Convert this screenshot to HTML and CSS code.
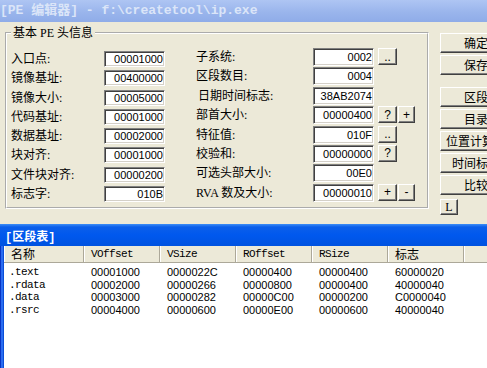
FILE: index.html
```html
<!DOCTYPE html>
<html>
<head>
<meta charset="utf-8">
<link rel="stylesheet" href="styles.css">
</head>
<body>
<div class="titlebar">[PE 编辑器] - f:\createtool\ip.exe</div>
<div class="panel">
  <fieldset class="group">
    <legend>基本 PE 头信息</legend>
    <div class="cols">
      <div class="col left">
        <div class="row"><span class="lbl">入口点:</span><span class="field">00001000</span></div>
        <div class="row"><span class="lbl">镜像基址:</span><span class="field">00400000</span></div>
        <div class="row"><span class="lbl">镜像大小:</span><span class="field">00005000</span></div>
        <div class="row"><span class="lbl">代码基址:</span><span class="field">00001000</span></div>
        <div class="row"><span class="lbl">数据基址:</span><span class="field">00002000</span></div>
        <div class="row"><span class="lbl">块对齐:</span><span class="field">00001000</span></div>
        <div class="row"><span class="lbl">文件块对齐:</span><span class="field">00000200</span></div>
        <div class="row"><span class="lbl">标志字:</span><span class="field">010B</span></div>
      </div>
      <div class="col right">
        <div class="row"><span class="lbl">子系统:</span><span class="field">0002</span><span class="btn b1">..</span></div>
        <div class="row"><span class="lbl">区段数目:</span><span class="field">0004</span></div>
        <div class="row"><span class="lbl ind">日期时间标志:</span><span class="field">38AB2074</span></div>
        <div class="row"><span class="lbl">部首大小:</span><span class="field">00000400</span><span class="btn b1">?</span><span class="btn b2">+</span></div>
        <div class="row"><span class="lbl">特征值:</span><span class="field">010F</span><span class="btn b1">..</span></div>
        <div class="row"><span class="lbl">校验和:</span><span class="field">00000000</span><span class="btn b1">?</span></div>
        <div class="row"><span class="lbl">可选头部大小:</span><span class="field">00E0</span></div>
        <div class="row"><span class="lbl">RVA 数及大小:</span><span class="field">00000010</span><span class="btn b1">+</span><span class="btn b2">-</span></div>
      </div>
    </div>
  </fieldset>
  <div class="side">
    <div class="btn big">确定</div>
    <div class="btn big">保存</div>
    <div class="btn big sep">区段</div>
    <div class="btn big">目录</div>
    <div class="btn big">位置计算器</div>
    <div class="btn big">时间标志</div>
    <div class="btn big">比较</div>
    <div class="btn lb">L</div>
  </div>
</div>
<div class="lower">
  <div class="gutter"></div>
  <div class="win">
    <div class="wtitle">
      <span>[区段表]</span>
      <svg class="close" width="12" height="13" viewBox="0 0 12 13">
        <rect x="0.5" y="0.5" width="11" height="12" rx="2" fill="#e25b2e" stroke="#ffffff"/>
        <path d="M3.3 3.8 L8.7 9.2 M8.7 3.8 L3.3 9.2" stroke="#ffffff" stroke-width="1.7" stroke-linecap="square"/>
      </svg>
    </div>
    <div class="wbody">
      <div class="wborder"></div>
      <div class="list">
        <div class="lhead">
          <div class="hc first">名称</div>
          <div class="hc mono">VOffset</div>
          <div class="hc mono">VSize</div>
          <div class="hc mono">ROffset</div>
          <div class="hc mono">RSize</div>
          <div class="hc">标志</div>
          <div class="hc fill"></div>
        </div>
        <div class="lrows">
          <div class="lrow"><span class="c first mono">.text</span><span class="c">00001000</span><span class="c">0000022C</span><span class="c">00000400</span><span class="c">00000400</span><span class="c">60000020</span></div>
          <div class="lrow"><span class="c first mono">.rdata</span><span class="c">00002000</span><span class="c">00000266</span><span class="c">00000800</span><span class="c">00000400</span><span class="c">40000040</span></div>
          <div class="lrow"><span class="c first mono">.data</span><span class="c">00003000</span><span class="c">00000282</span><span class="c">00000C00</span><span class="c">00000200</span><span class="c">C0000040</span></div>
          <div class="lrow"><span class="c first mono">.rsrc</span><span class="c">00004000</span><span class="c">00000600</span><span class="c">00000E00</span><span class="c">00000600</span><span class="c">40000040</span></div>
        </div>
      </div>
    </div>
  </div>
</div>
</body>
</html>
```

FILE: styles.css
```css
* { box-sizing: border-box; }
html, body { margin: 0; padding: 0; }
body {
  width: 487px;
  height: 368px;
  overflow: hidden;
  background: #ece9d8;
  color: #000;
  font: 12px "Liberation Serif", "Noto Sans CJK SC", serif;
}

.titlebar {
  height: 22px;
  background: linear-gradient(#aec5f3, #9ab5ec 55%, #8face8);
  color: #dbe5f8;
  font: bold 13px/22px "Liberation Mono", "Noto Sans CJK SC", monospace;
  white-space: nowrap;
  overflow: hidden;
}

.panel {
  height: 202px;
  display: flex;
  align-items: flex-start;
}

.group {
  margin: 4px 0 0 5px;
  padding: 0;
  width: 424px;
  height: 183px;
  min-width: 0;
  border: 2px groove #ffffff;
  flex: none;
}
.group legend {
  margin-left: 4px;
  padding: 0 2px;
  font-size: 12px;
  line-height: 14px;
}

.cols { display: flex; }
.col { display: flex; flex-direction: column; }
.col.left { margin-left: 4px; padding-top: 11px; }
.col.right { margin-left: 31px; padding-top: 8px; }

.row { display: flex; align-items: flex-start; }
.left .row { height: 19.3px; }
.right .row { height: 19.4px; }

.lbl { white-space: nowrap; }
.left .lbl { width: 93px; height: 16px; line-height: 16px; }
.right .lbl { width: 117px; height: 18px; line-height: 18px; }
.right .lbl.ind { padding-left: 2px; }

.field {
  width: 61px;
  background: #fff;
  border: 1px solid;
  border-color: #808080 #ffffff #ffffff #808080;
  box-shadow: inset 1px 1px 0 #404040, inset -1px -1px 0 #d4d0c8;
  text-align: right;
  padding-right: 1px;
  font: 11px "Liberation Sans", sans-serif;
}
.left .field { height: 16px; line-height: 14px; }
.right .field { height: 18px; line-height: 16px; }

.btn {
  background: #ece9d8;
  border: 1px solid;
  border-color: #ffffff #404040 #404040 #ffffff;
  box-shadow: inset -1px -1px 0 #808080;
  display: flex;
  align-items: center;
  justify-content: center;
  white-space: nowrap;
  overflow: hidden;
  font-size: 12px;
}
.btn.b1 { width: 19px; height: 17px; margin-left: 4px; font-family: "Liberation Sans", sans-serif; font-size: 12px; }
.btn.b2 { width: 17px; height: 17px; margin-left: 1px; font-family: "Liberation Sans", sans-serif; font-size: 12px; }

.side {
  margin-left: 11px;
  padding-top: 11px;
  display: flex;
  flex-direction: column;
  gap: 2px;
  flex: none;
}
.btn.big { width: 72px; height: 20px; }
.btn.sep { margin-top: 10px; }
.btn.lb { width: 18px; height: 16px; margin-top: 2px; font-family: "Liberation Serif", serif; }

.lower {
  height: 144px;
  display: flex;
}
.gutter { width: 4px; background: #f4f3ee; }
.win {
  flex: 1;
  display: flex;
  flex-direction: column;
  background: #fff;
}
.wtitle {
  height: 22px;
  display: flex;
  align-items: center;
  padding-left: 5px;
  padding-top: 1px;
  background: linear-gradient(#3d8ef7 0, #0b5fea 3px, #0058ee 50%, #0053e0 100%);
  color: #fff;
  font: bold 12px "Liberation Mono", "Noto Sans CJK SC", monospace;
}
.close { margin-left: auto; margin-right: 3px; }

.wbody { flex: 1; display: flex; }
.wborder {
  width: 4px;
  background: linear-gradient(90deg, #0934c4 0 1px, #2b6cf0 1px 3px, #0a4fd8 3px 4px);
}
.list {
  flex: 1;
  margin-right: 1px;
  border-right: 1px solid #bdbbae;
  background: #fff;
}
.lhead {
  display: flex;
  height: 17px;
  background: #ece9d8;
  border-bottom: 1px solid #aca899;
}
.hc {
  width: 76px;
  border-left: 1px solid #fff;
  border-right: 1px solid #aca899;
  padding-left: 6px;
  display: flex;
  align-items: center;
  white-space: nowrap;
  font-size: 12px;
}
.hc.first { width: 80px; }
.hc.fill { flex: 1; border-right: 0; }

.mono {
  font-family: "Liberation Mono", monospace;
  font-size: 11px;
  letter-spacing: -0.6px;
}

.lrows { padding-top: 2.7px; }
.lrow {
  display: flex;
  height: 12.67px;
  align-items: center;
}
.c {
  width: 76px;
  padding-left: 7px;
  font: 11px "Liberation Sans", sans-serif;
  white-space: nowrap;
}
.c.first { width: 80px; padding-left: 5px; }
.c.mono { font-family: "Liberation Mono", monospace; font-size: 11px; letter-spacing: -0.6px; }
```
